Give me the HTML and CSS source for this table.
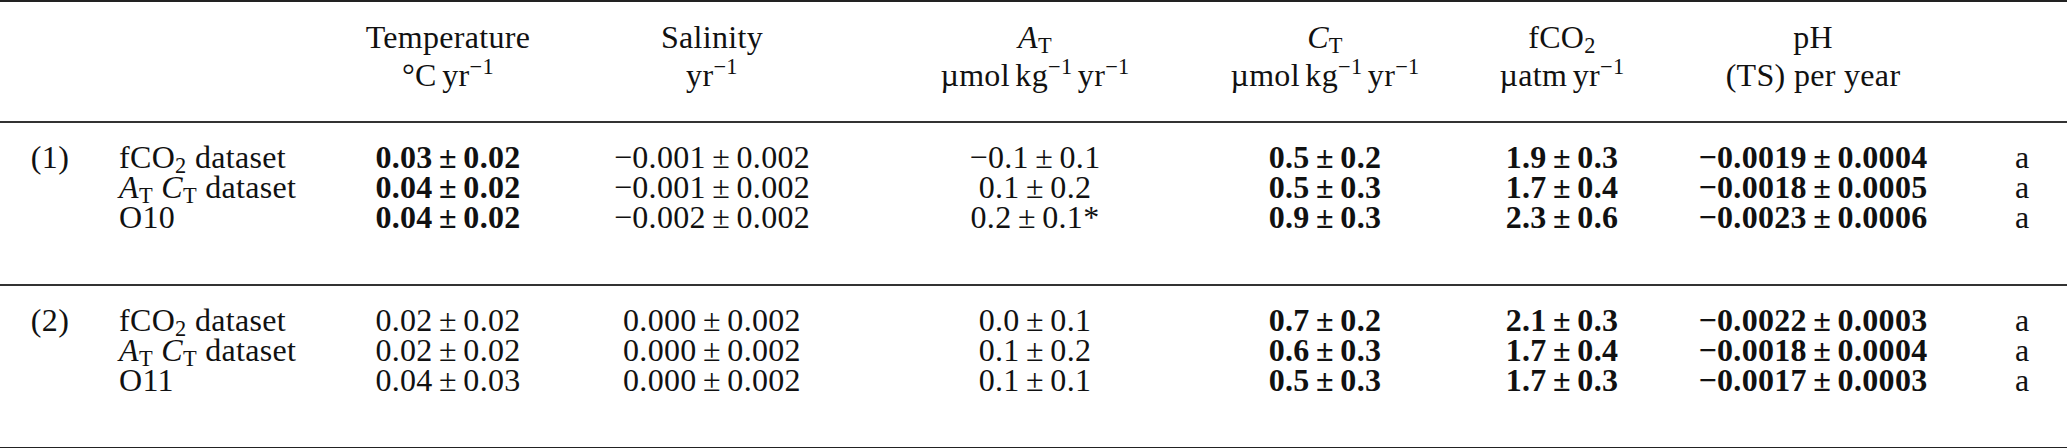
FILE: index.html
```html
<!DOCTYPE html>
<html lang="en">
<head>
    <meta charset="UTF-8">
    <title>Trends</title>
    <link rel="stylesheet" href="styles.css">
</head>
<body>
    <table class="trends">
        <colgroup>
            <col class="c-num">
            <col class="c-label">
            <col class="c-temp">
            <col class="c-sal">
            <col class="c-at">
            <col class="c-ct">
            <col class="c-fco2">
            <col class="c-ph">
            <col class="c-ref">
        </colgroup>
        <thead>
            <tr>
                <th></th>
                <th></th>
                <th>Temperature<br>°C<span class="sp"></span>yr<sup>−1</sup></th>
                <th>Salinity<br>yr<sup>−1</sup></th>
                <th class="at"><i>A</i><sub>T</sub><br>µmol<span class="sp"></span>kg<sup>−1</sup><span class="sp"></span>yr<sup>−1</sup></th>
                <th><i>C</i><sub>T</sub><br>µmol<span class="sp"></span>kg<sup>−1</sup><span class="sp"></span>yr<sup>−1</sup></th>
                <th>fCO<sub>2</sub><br>µatm<span class="sp"></span>yr<sup>−1</sup></th>
                <th>pH<br>(TS) per year</th>
                <th></th>
            </tr>
        </thead>
        <tbody>
            <tr>
                <td class="num">(1)</td>
                <td class="label">fCO<sub>2</sub> dataset</td>
                <td><b>0.03<span class="pm">±</span>0.02</b></td>
                <td>−0.001<span class="pm">±</span>0.002</td>
                <td class="at">−0.1<span class="pm">±</span>0.1</td>
                <td><b>0.5<span class="pm">±</span>0.2</b></td>
                <td><b>1.9<span class="pm">±</span>0.3</b></td>
                <td><b>−0.0019<span class="pm">±</span>0.0004</b></td>
                <td class="ref">a</td>
            </tr>
            <tr>
                <td class="num"></td>
                <td class="label"><i>A</i><sub>T</sub> <i>C</i><sub>T</sub> dataset</td>
                <td><b>0.04<span class="pm">±</span>0.02</b></td>
                <td>−0.001<span class="pm">±</span>0.002</td>
                <td class="at">0.1<span class="pm">±</span>0.2</td>
                <td><b>0.5<span class="pm">±</span>0.3</b></td>
                <td><b>1.7<span class="pm">±</span>0.4</b></td>
                <td><b>−0.0018<span class="pm">±</span>0.0005</b></td>
                <td class="ref">a</td>
            </tr>
            <tr>
                <td class="num"></td>
                <td class="label">O10</td>
                <td><b>0.04<span class="pm">±</span>0.02</b></td>
                <td>−0.002<span class="pm">±</span>0.002</td>
                <td class="at">0.2<span class="pm">±</span>0.1*</td>
                <td><b>0.9<span class="pm">±</span>0.3</b></td>
                <td><b>2.3<span class="pm">±</span>0.6</b></td>
                <td><b>−0.0023<span class="pm">±</span>0.0006</b></td>
                <td class="ref">a</td>
            </tr>
        </tbody>
        <tbody>
            <tr>
                <td class="num">(2)</td>
                <td class="label">fCO<sub>2</sub> dataset</td>
                <td>0.02<span class="pm">±</span>0.02</td>
                <td>0.000<span class="pm">±</span>0.002</td>
                <td class="at">0.0<span class="pm">±</span>0.1</td>
                <td><b>0.7<span class="pm">±</span>0.2</b></td>
                <td><b>2.1<span class="pm">±</span>0.3</b></td>
                <td><b>−0.0022<span class="pm">±</span>0.0003</b></td>
                <td class="ref">a</td>
            </tr>
            <tr>
                <td class="num"></td>
                <td class="label"><i>A</i><sub>T</sub> <i>C</i><sub>T</sub> dataset</td>
                <td>0.02<span class="pm">±</span>0.02</td>
                <td>0.000<span class="pm">±</span>0.002</td>
                <td class="at">0.1<span class="pm">±</span>0.2</td>
                <td><b>0.6<span class="pm">±</span>0.3</b></td>
                <td><b>1.7<span class="pm">±</span>0.4</b></td>
                <td><b>−0.0018<span class="pm">±</span>0.0004</b></td>
                <td class="ref">a</td>
            </tr>
            <tr>
                <td class="num"></td>
                <td class="label">O11</td>
                <td>0.04<span class="pm">±</span>0.03</td>
                <td>0.000<span class="pm">±</span>0.002</td>
                <td class="at">0.1<span class="pm">±</span>0.1</td>
                <td><b>0.5<span class="pm">±</span>0.3</b></td>
                <td><b>1.7<span class="pm">±</span>0.3</b></td>
                <td><b>−0.0017<span class="pm">±</span>0.0003</b></td>
                <td class="ref">a</td>
            </tr>
        </tbody>
    </table>
</body>
</html>
```

FILE: styles.css
```css
* {
    box-sizing: border-box;
}

body {
    margin: 0;
    background: #fff;
    color: #111;
    font-family: "Liberation Serif", "Times New Roman", serif;
    font-size: 32px;
    letter-spacing: 0.01em;
}

.trends {
    width: 2067px;
    border-collapse: collapse;
    table-layout: fixed;
}

.c-num { width: 100px; }
.c-label { width: 216px; }
.c-temp { width: 264px; }
.c-sal { width: 264px; }
.c-at { width: 340px; }
.c-ct { width: 282px; }
.c-fco2 { width: 192px; }
.c-ph { width: 310px; }
.c-ref { width: 99px; }

.trends thead tr {
    border-top: 2px solid #222;
    border-bottom: 2px solid #333;
}

.trends th {
    font-weight: normal;
    text-align: center;
    line-height: 38px;
    padding: 16px 0 27px 0;
    white-space: nowrap;
}

.trends tbody {
    border-bottom: 2px solid #333;
}

.trends tbody:last-child {
    border-bottom: 2px solid #222;
}

.trends td {
    text-align: center;
    line-height: 30px;
    height: 30px;
    padding: 0;
    white-space: nowrap;
}

.trends tbody tr:first-child td {
    padding-top: 19px;
    height: 49px;
}

.trends tbody tr:last-child td {
    padding-bottom: 52px;
    height: 82px;
}

/* shift the A_T column content right of the cell centre */
.trends .at {
    padding-left: 42px;
}

.trends td.label {
    text-align: left;
    padding-left: 19px;
}

.trends td.ref {
    text-align: left;
    padding-left: 47px;
}

.pm {
    margin: 0 0.2em;
}

sub, sup {
    font-size: 0.7em;
    line-height: 0;
}

sub {
    vertical-align: -0.22em;
}

sup {
    vertical-align: 0.55em;
}

.sp {
    display: inline-block;
    width: 0.17em;
}
```
